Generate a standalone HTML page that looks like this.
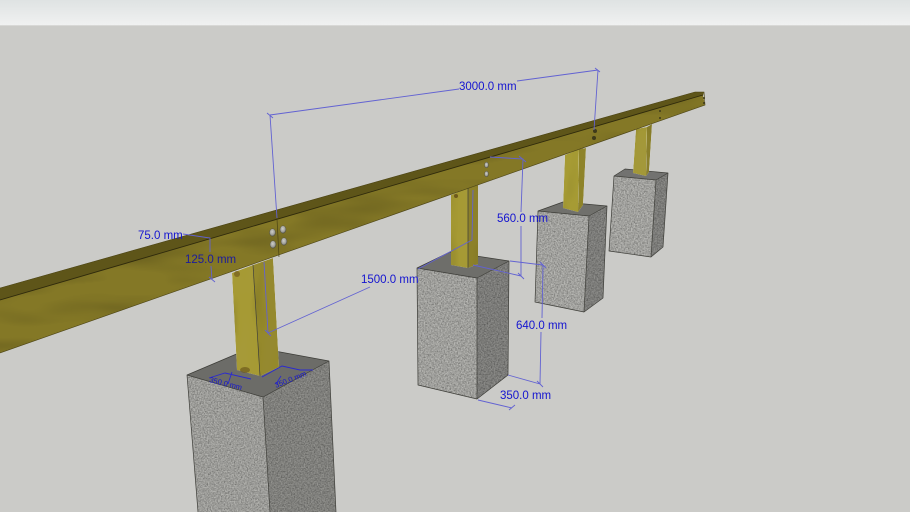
<!DOCTYPE html>
<html><head><meta charset="utf-8"><style>
html,body{margin:0;padding:0;width:910px;height:512px;overflow:hidden;background:#cbcbc8}
svg{display:block;filter:blur(.35px)}
text{font-family:"Liberation Sans",sans-serif;font-size:11.500px;fill:#1414d0}
.d{stroke:#6262d2;stroke-width:.9;fill:none}
.e{stroke:#3d3d38;stroke-width:.7;stroke-linejoin:round}
</style></head><body>
<svg width="910" height="512" viewBox="0 0 910 512" xmlns="http://www.w3.org/2000/svg">
<defs>
<linearGradient id="bar" x1="0" y1="0" x2="0" y2="1"><stop offset="0" stop-color="#dfe3e3"/><stop offset="1" stop-color="#f0f1f1"/></linearGradient>
<filter id="con" x="0" y="0" width="100%" height="100%" color-interpolation-filters="sRGB">
<feTurbulence type="fractalNoise" baseFrequency=".7" numOctaves="3" seed="4" result="n"/>
<feColorMatrix in="n" type="matrix" values=".45 .45 0 0 .42  .45 .45 0 0 .42  .45 .45 0 0 .42  0 0 0 0 1" result="g"/>
<feBlend in="SourceGraphic" in2="g" mode="multiply" result="m"/>
<feGaussianBlur in="m" stdDeviation=".35" result="b"/>
<feComposite in="b" in2="SourceGraphic" operator="in"/>
</filter>
<filter id="wood" x="0" y="0" width="100%" height="100%" color-interpolation-filters="sRGB">
<feTurbulence type="fractalNoise" baseFrequency=".01 .05" numOctaves="2" seed="8" result="n"/>
<feColorMatrix in="n" type="matrix" values=".25 .25 0 0 .72  .25 .25 0 0 .72  .25 .25 0 0 .72  0 0 0 0 1" result="g"/>
<feBlend in="SourceGraphic" in2="g" mode="multiply" result="m"/>
<feComposite in="m" in2="SourceGraphic" operator="in"/>
</filter>
<filter id="woodv" x="0" y="0" width="100%" height="100%" color-interpolation-filters="sRGB">
<feTurbulence type="fractalNoise" baseFrequency=".05 .015" numOctaves="2" seed="3" result="n"/>
<feColorMatrix in="n" type="matrix" values=".3 .3 0 0 .7  .3 .3 0 0 .7  .3 .3 0 0 .62  0 0 0 0 1" result="g"/>
<feBlend in="SourceGraphic" in2="g" mode="multiply" result="m"/>
<feComposite in="m" in2="SourceGraphic" operator="in"/>
</filter>
<radialGradient id="bolt" cx=".45" cy=".4" r=".6"><stop offset="0" stop-color="#cfcfca"/><stop offset=".7" stop-color="#9c9c96"/><stop offset="1" stop-color="#55554a"/></radialGradient>
</defs>
<rect width="910" height="512" fill="#cbcbc8"/>
<rect width="910" height="25" fill="url(#bar)"/>
<rect y="25" width="910" height="1" fill="#d8d8d6"/>

<!-- block 4 -->
<polygon points="614,176 625,169 668,173 656,180" fill="#727270"/>
<polygon points="614,176 656,180 651,257 609,251" fill="#b8b8b4" filter="url(#con)"/>
<polygon points="656,180 668,173 663,247 651,257" fill="#8e8e8b" filter="url(#con)"/>
<polygon class="e" fill="none" points="614,176 625,169 668,173 663,247 651,257 609,251"/>
<path class="e" fill="none" d="M614,176 656,180 668,173M656,180 651,257"/>
<polygon points="636,129 647,127 646,176 633,173" fill="#a3983a" filter="url(#woodv)"/>
<polygon points="647,127 652,124 649,172 646,176" fill="#8a7f2c" filter="url(#woodv)"/>

<!-- block 3 -->
<polygon points="538,211 563,202 607,206 589,216" fill="#70706c"/>
<polygon points="538,211 589,216 584,312 535,302" fill="#b8b8b4" filter="url(#con)"/>
<polygon points="589,216 607,206 603,298 584,312" fill="#8e8e8b" filter="url(#con)"/>
<polygon class="e" fill="none" points="538,211 563,202 607,206 603,298 584,312 535,302"/>
<path class="e" fill="none" d="M538,211 589,216 607,206M589,216 584,312"/>
<polygon points="565,155 579,149 578,212 563,208" fill="#a69b38" filter="url(#woodv)"/>
<polygon points="579,149 586,148 583,205 578,212" fill="#8e832c" filter="url(#woodv)"/>

<!-- block 2 -->
<polygon points="417,268 450,252 509,261 477,278" fill="#6e6e6a"/>
<polygon points="417,268 477,278 477,399 418,385" fill="#b6b6b2" filter="url(#con)"/>
<polygon points="477,278 509,261 508,375 477,399" fill="#8d8d8a" filter="url(#con)"/>
<polygon class="e" fill="none" points="417,268 450,252 509,261 508,375 477,399 418,385"/>
<path class="e" fill="none" d="M417,268 477,278 509,261M477,278 477,399"/>
<polygon points="451,195 468,188 468,268 451,265" fill="#a69a38" filter="url(#woodv)"/>
<polygon points="468,188 478,185 478,264 468,268" fill="#8c802c" filter="url(#woodv)"/>
<path class="e" fill="none" d="M468,188 468,268"/>
<circle cx="456" cy="196" r="2" fill="#6e5a1c"/>

<!-- block 1 -->
<polygon points="187,375 253,347 329,361 263,397" fill="#6c6c68"/>
<polygon points="187,375 263,397 270,512 198,512" fill="#b2b2ae" filter="url(#con)"/>
<polygon points="263,397 329,361 336,512 270,512" fill="#92928e" filter="url(#con)"/>
<path class="e" fill="none" d="M198,512 187,375 253,347 329,361 336,512M187,375 263,397 329,361M263,397 270,512"/>
<polygon points="232,273 253,265 260,376 237,370" fill="#a69a38" filter="url(#woodv)"/>
<polygon points="253,265 273,258 279,367 260,376" fill="#95892f" filter="url(#woodv)"/>
<path class="e" fill="none" d="M253,265 260,376"/>
<circle cx="237" cy="274" r="3" fill="#7a6420" opacity=".8"/>
<ellipse cx="245" cy="370" rx="5" ry="3" fill="#6e5a1c" opacity=".7"/>

<!-- beam -->
<polygon points="0,288 695,92 704,92 703,96 0,300" fill="#5e5519"/>
<polygon points="0,300 703,95 705,105 0,353" fill="#847826" filter="url(#wood)"/>
<path d="M0,300 703,95" stroke="#2f2a0c" stroke-width=".9" fill="none"/>
<path d="M0,288 695,92 704,92 705,105 0,353" stroke="#4a4213" stroke-width=".6" fill="none"/>
<path d="M277,219 279,257" stroke="#4a4213" stroke-width=".7"/>
<g fill="url(#bolt)" stroke="#4c4c40" stroke-width=".4">
<ellipse cx="272.500" cy="232.500" rx="3" ry="3.800"/><ellipse cx="283" cy="229.500" rx="3" ry="3.800"/>
<ellipse cx="273" cy="244.500" rx="3" ry="3.800"/><ellipse cx="284" cy="241.500" rx="3" ry="3.800"/>
<ellipse cx="486.500" cy="165" rx="2" ry="2.800"/><ellipse cx="486.500" cy="174" rx="2" ry="2.800"/>
</g>
<g fill="#3e3a1a"><circle cx="595" cy="131" r="2"/><circle cx="594" cy="138" r="2"/><circle cx="660" cy="111" r="1"/><circle cx="660" cy="118" r="1"/><circle cx="704" cy="98" r="1"/><circle cx="704" cy="103" r="1"/></g>

<!-- dimensions -->
<path class="d" d="M270,115 459,89M517,81 598,70M270,115 277,218M598,70 594,130M267,113 273,118M595,68 600,72"/>
<path class="d" d="M264,262 268,333 370,287M418,269 472,240 473,190M265,330 271,336"/>
<path class="d" d="M490,157 523,159 521,212M521,226 521,276M473,265 521,276M519,156 526,162M518,273 524,279"/>
<path class="d" d="M510,261 543,265 542,318M541,332 540,384M508,375 540,384M540,262 546,268M537,381 543,387"/>
<path class="d" d="M478,400 512,408M509,410 515,405"/>
<path class="d" d="M183,234 210,238 210,252M211,266 212,280M209,277 215,282"/>
<path class="d" style="stroke:#2a2ad0" d="M209,378 225,373 251,379M262,377 282,366 300,370 313,370M232,372 228,384M276,384 281,376"/>

<text x="459" y="90">3000.0 mm</text>
<text x="138" y="239">75.0 mm</text>
<text x="185" y="263" style="fill:#1c1c9c">125.0 mm</text>
<text x="361" y="283">1500.0 mm</text>
<text x="497" y="222">560.0 mm</text>
<text x="516" y="329">640.0 mm</text>
<text x="500" y="399">350.0 mm</text>
<text transform="translate(209,382) rotate(14)" style="font-size:7.500px">350.0 mm</text>
<text transform="translate(276,388) rotate(-22)" style="font-size:7.500px">350.0 mm</text>
</svg>
</body></html>
